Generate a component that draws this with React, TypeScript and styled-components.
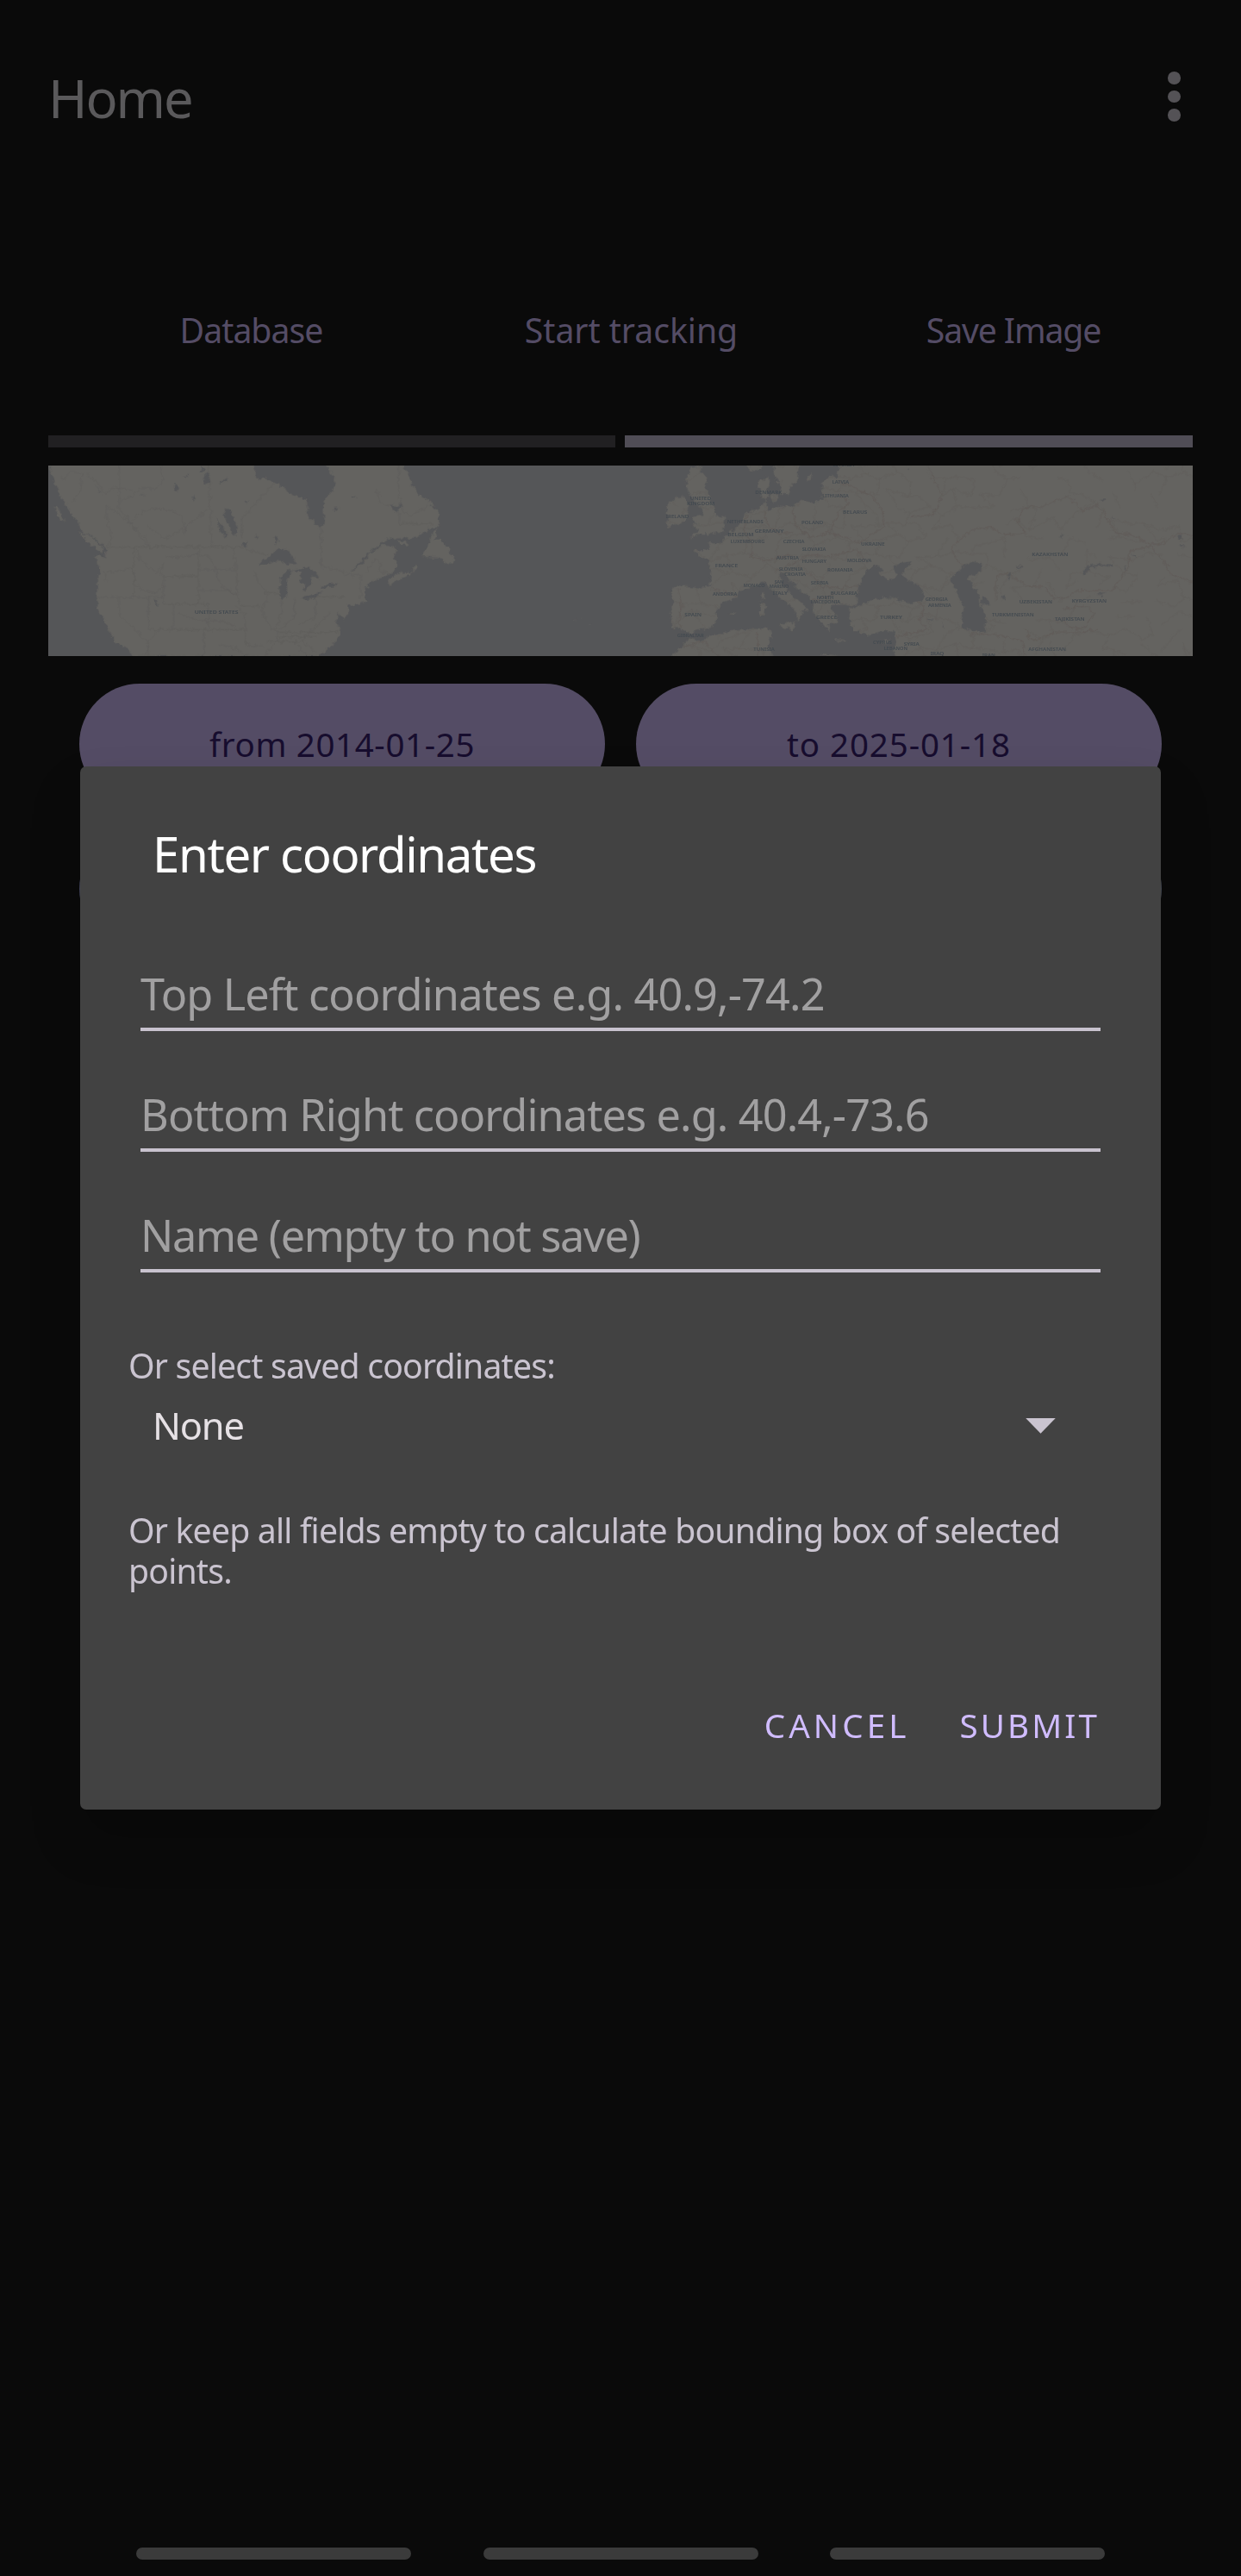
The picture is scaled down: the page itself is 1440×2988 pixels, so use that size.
import React from 'react';
import styled, { createGlobalStyle } from 'styled-components';

const GlobalStyle = createGlobalStyle`
  *, *::before, *::after { box-sizing: border-box; }
  body { margin: 0; background: #0a0a0a; }
`;

const Screen = styled.div`
  position: relative;
  display: flex;
  flex-direction: column;
  width: 1440px;
  height: 2988px;
  background: #0a0a0a;
  font-family: 'Noto Sans', 'Open Sans', sans-serif;
  overflow: hidden;
`;

const AppBar = styled.header`
  display: flex;
  align-items: center;
  justify-content: space-between;
  height: 224px;
  padding: 0 70px 0 56px;
`;

const PageTitle = styled.h1`
  margin: 0;
  padding-top: 1px;
  font-size: 61.5px;
  font-weight: 400;
  letter-spacing: -2.1px;
  color: #5a595b;
`;

const MoreButton = styled.button`
  display: flex;
  flex-direction: column;
  align-items: center;
  gap: 7px;
  padding: 0;
  border: 0;
  background: none;
`;

const Dot = styled.span`
  width: 15px;
  height: 14.5px;
  border-radius: 50%;
  background: #545256;
`;

const Actions = styled.nav`
  display: grid;
  grid-template-columns: 441px 441px 446px;
  height: 245px;
  margin: 36px 0 0 71px;
`;

const ActionButton = styled.button<{ $track: number }>`
  padding: 0;
  border: 0;
  background: none;
  font: inherit;
  font-size: 39.2px;
  letter-spacing: ${(p) => p.$track}px;
  color: #544c65;
`;

const Content = styled.main`
  display: flex;
  flex-direction: column;
  padding: 0 56px;
`;

const Progress = styled.div`
  display: grid;
  grid-template-columns: 658px 659px;
  gap: 11px;
  height: 14px;
`;

const Segment = styled.div<{ $active?: boolean }>`
  background: ${(p) => (p.$active ? '#504d56' : '#212022')};
`;

const MapFrame = styled.div`
  height: 221px;
  margin-top: 21px;
  background: #555658;

  svg { display: block; }
`;

const PillGrid = styled.div`
  display: grid;
  grid-template-columns: 610px 610px;
  gap: 28px 36px;
  margin: 32px 36px 0;
`;

const Pill = styled.button<{ $tone: string; $track?: number }>`
  height: 140px;
  padding: 0;
  border: 0;
  border-radius: 70px;
  background: ${(p) => p.$tone};
  font: inherit;
  font-size: 38.5px;
  letter-spacing: ${(p) => p.$track ?? 0}px;
  color: #170d2e;
`;

const SystemNav = styled.footer`
  display: flex;
  justify-content: center;
  gap: 83.5px;
  margin-top: auto;
  padding-bottom: 19px;
`;

const NavHandle = styled.span`
  width: 319px;
  height: 14px;
  border-radius: 7px;
  background: #3b3b3b;
`;

const Overlay = styled.div`
  position: absolute;
  inset: 0;
  display: flex;
  align-items: center;
  justify-content: center;
`;

const Dialog = styled.section`
  display: flex;
  flex-direction: column;
  width: 1254px;
  height: 1210px;
  border-radius: 7px;
  background: #424242;
  box-shadow: 0 34px 60px rgba(0, 0, 0, 0.2);
`;

const DialogTitle = styled.h2`
  margin: 0;
  padding: 36px 84px 0;
  font-size: 56.4px;
  font-weight: 400;
  line-height: 132px;
  letter-spacing: -1.39px;
  color: #ffffff;
`;

const Field = styled.div<{ $track: number }>`
  height: 140px;
  margin: 0 70px;
  padding-top: 57px;
  border-bottom: 4px solid #c8c2ce;
  font-size: 50.4px;
  line-height: 79px;
  letter-spacing: ${(p) => p.$track}px;
  white-space: nowrap;
  color: #a1a0a1;
`;

const Fields = styled.div`
  display: flex;
  flex-direction: column;
  margin-top: -1px;
`;

const Note = styled.p<{ $gap: number }>`
  margin: ${(p) => p.$gap}px 56px 0;
  font-size: 39.2px;
  line-height: 46.8px;
  letter-spacing: -0.82px;
  color: #cac4d0;
`;

const Select = styled.div`
  display: flex;
  align-items: center;
  justify-content: space-between;
  height: 92px;
  padding: 0 122px 0 84px;
  font-size: 43.4px;
  letter-spacing: -1.19px;
  color: #e6e1e5;
`;

const Caret = styled.span`
  width: 35px;
  height: 18px;
  background: #cac4d0;
  clip-path: polygon(0 0, 100% 0, 50% 100%);
`;

const DialogActions = styled.div`
  display: flex;
  justify-content: flex-end;
  gap: 58px;
  height: 96px;
  margin: auto 71px 50px 0;
`;

const TextButton = styled.button<{ $track: number }>`
  padding: 0;
  border: 0;
  background: none;
  font: inherit;
  font-size: 38.5px;
  letter-spacing: ${(p) => p.$track}px;
  color: #d0bcff;
`;

const MapLabel = styled.text`
  font-family: 'Noto Sans', 'Open Sans', sans-serif;
  font-weight: 600;
  fill: #434a50;
`;

// Map shapes use three units per pixel, with one local origin for each region.
const americaLand =
  'M48 30 60 60 75 95 90 130 110 165 125 195 150 225 165 262 200 272 230 300 250 325 250 355 222 340 213 345 228 385 222 440 218 475 222 525 240 560 260 600 285 650 320 660 343 693H990L1020 665 1060 630 1062 600 1050 570 1058 543 1075 565 1090 545 1092 515 1125 512 1160 500 1150 480 1150 455 1180 430 1215 415 1248 400 1258 383 1250 345 1260 325 1250 312 1212 310 1170 335 1140 375 1090 410 1130 370 1170 325 1210 300 1222 283 1330 280 1370 250 1405 240 1408 190 1385 170 1378 155 1340 135 1310 95 1300 60 1285 30V10H1005L1015 30 1047 70 1045 110 1005 150 1012 230 990 250 950 200 948 150 900 135 850 95 800 75 775 80 762 30V10H48Z';
const americaIslands =
  'M1405 245 1390 290 1415 290 1445 320 1440 340 1462 345 1455 372 1430 368 1410 350 1348 348 1370 310 1385 265ZM1335 385 1325 370 1315 400 1265 405 1230 432 1238 450 1260 430 1310 408ZM1260 290 1285 293 1305 310 1280 305ZM152 262 200 278 240 320 235 335 195 305ZM70 172 90 185 103 230 80 205ZM1875 565 1888 568 1878 569ZM1930 582 1940 583 1930 585ZM1900 561 1910 563 1902 564Z';
const americaLakes =
  'M782 375 830 335 850 318 885 325 905 355 910 378 880 372 850 360 810 372ZM855 420 880 395 900 392 880 430 880 485 862 495 853 475ZM900 390 950 385 980 400 992 425 965 415 955 450 935 470 940 440 922 435 930 405ZM930 492 965 478 1005 468 975 490 945 500ZM995 455 1020 440 1055 440 1040 455ZM658 180 680 182 692 215 704 240 702 275 690 265 680 245 665 215ZM635 205 650 240 672 270 668 282 645 255ZM835 282 842 276 848 290 840 304ZM415 495 425 498 432 515 424 512ZM595 55 612 60 605 90 592 95ZM580 35 590 35 588 52 578 55ZM645 90 675 70 668 82 650 96ZM485 95 500 105 498 122 488 115ZM515 70 535 64 530 72ZM728 300 742 292 738 315 728 314ZM550 138 562 145 552 150ZM735 152 748 154 738 160ZM765 272 782 278 770 282ZM1100 140 1122 140 1105 147ZM1035 180 1062 178 1050 188ZM212 98 235 130 228 124ZM365 130 385 131 370 134ZM1242 170 1280 168 1265 185 1245 184Z';
const americaBorders =
  'M250 313H722L728 320 745 325 780 335 810 340M295 30V180L330 225 370 280 398 313M440 30 445 90 420 110 365 110 340 135 300 150M608 30 612 200 616 313M722 280V215L835 90M345 313V488M218 488H448M295 488V550L390 640 398 693M398 488V601H735M448 415V511H605M448 415H570M570 315V510M570 392H700M570 464H670L705 480M440 415 448 370 430 400 400 390 360 345 355 320M345 440 380 465 420 472 450 445M484 511V601M440 600 398 640 388 693M605 511V600M590 601V693M690 315 702 370 705 470 715 520H788M570 340 605 345 635 390 635 425 660 455 705 480M735 600V650L795 660M700 520 730 545 735 600M800 475H855M765 400 780 440 805 465 808 500 790 540 825 595 845 610H1060M860 495V540L840 600M905 490V560L850 600M980 490V560L920 580M980 487H1080M845 625H980M810 643H935L980 680M250 313 270 290 250 210 250 170 320 220 395 290 398 313M345 215 380 190 430 178 490 190 520 225 520 270M390 240 455 285 520 250 600 185M998 250V380L1080 400M95 80 130 50 165 60 160 120 130 160M180 60 215 85 245 130 280 105 340 115M250 400 340 390 350 410 345 440M240 400 250 430M460 345 500 350 570 338M642 655 700 665 735 693M500 545 570 570 650 570 700 590M845 610 845 640 800 693M930 643 960 610 1000 570 1030 545M900 640 950 693M1080 410H1135V490M1270 232H1385M1270 232V200L1240 170 1205 160 1190 110M1268 30V120L1275 180 1310 205 1370 168M1155 400 1185 360 1205 370 1200 395 1230 405';
const eurasiaLand =
  'M700 10 695 70 670 65 645 85 640 130 645 145 610 160 570 152 530 175 495 170 470 175 460 190 445 160 430 130 420 110 420 85 440 75 458 65 460 95 445 120 460 140 440 155 425 180 400 185 375 200 360 230 330 255 305 270 300 290 275 305 245 298 250 325 195 325 210 342 245 360 255 400 252 450 200 452 140 448 118 462 125 500 115 545 122 598 155 600 185 612 210 600 250 598 275 570 270 540 300 505 345 490 350 470 375 458 415 450 435 432 470 465 500 495 530 515 553 540 555 575 572 550 570 535 598 530 570 510 545 490 515 455 495 420 492 402 510 402 530 430 565 465 600 490 612 520 620 560 640 580 660 605 672 610 665 580 695 575 690 550 670 530 680 515 720 515 745 520 770 510 760 480 780 425 800 390 825 378 845 385 850 400 840 405 870 430 910 412 890 400 885 385 920 370 955 362 930 390 920 412 960 440 990 460 998 485 985 505 940 510 880 488 820 495 775 515 735 530 740 570 750 600 800 620 860 605 895 610 898 650 885 710H1960V10H700Z';
const eurasiaIslands =
  'M370 25 400 50 430 40 440 25ZM470 15 480 70 495 105 500 132 525 128 530 105 555 85 567 15ZM118 710 118 693 160 655 175 630 215 640 270 620 330 605 400 598 460 595 467 620 455 650 475 710ZM630 693 650 685 700 693ZM492 580 550 575 540 603 500 590ZM425 510 445 508 442 550 425 558ZM432 470 442 475 438 500 428 495ZM685 633 735 638 730 643 690 640ZM845 642 882 632 870 650 855 652ZM318 545 338 537 330 550ZM185 35 222 32 215 60 243 65 235 105 245 125 262 170 275 205 305 210 298 245 300 262 250 268 215 268 180 285 215 250 190 240 200 230 190 210 225 200 225 175 205 165 180 130 165 90 175 60ZM135 140 165 140 180 165 170 205 170 225 110 245 98 235 110 215 100 195 108 165ZM590 70 605 55 602 80 593 82ZM460 132 485 130 488 152 468 155Z';
const eurasiaLakes =
  'M1088 425 1125 385 1165 365 1197 370 1195 402 1150 415 1160 445 1188 475 1192 515 1210 540 1212 605 1175 608 1130 595 1125 560 1135 530 1115 480 1100 450ZM1195 488 1215 490 1225 512 1198 518ZM1552 400 1565 378 1600 372 1650 374 1645 382 1610 378 1570 384 1560 412ZM1690 380 1700 386 1698 396ZM1288 432 1294 400 1300 405 1292 432ZM1315 378 1340 382 1332 388ZM1265 485 1278 480 1280 498 1268 497ZM1600 478 1632 474 1615 484ZM1878 278 1890 272 1896 282 1886 288ZM1888 306 1903 308 1898 316ZM1718 335 1740 342 1738 348ZM1608 152 1630 146 1622 156ZM1468 275 1482 272 1476 284ZM1655 202 1662 212 1656 210ZM1010 562 1028 568 1014 570ZM1058 575 1068 598 1062 592ZM935 38 948 34 944 46Z';
const eurasiaNations =
  'M1125 285 1140 270 1165 255 1200 245 1240 250 1270 270 1345 268 1340 250 1320 230 1345 175 1400 175 1500 135 1550 190 1600 165 1665 265 1720 270 1785 305 1830 300 1880 265 1932 272M1125 285 1090 320 1120 370 1160 390M1247 500V415L1290 405 1355 450 1410 450 1450 495 1500 490 1530 465 1650 465 1680 425 1710 380 1710 330 1785 310M1785 310 1835 370 1860 410 1932 435M1480 530 1560 520 1590 545 1560 590 1540 600 1500 590 1470 560M1350 600 1370 640 1460 610 1540 610 1600 600M1160 615 1250 620 1340 640 1345 693M700 130 740 160 700 190 665 265 700 270 770 300 860 240 850 180 820 140 740 100 700 90M540 175 550 240 600 280 665 265M440 190 455 240 490 270 540 260M380 200 370 250 400 310 395 350 440 360 540 340M255 460 345 480M140 460 150 500 145 595M480 400 540 370 600 340 680 345 760 320 800 370M590 400 640 450 700 455 780 450M610 500 680 480M960 500 1000 520 980 570 1010 600 900 625M160 660 230 640 280 693M415 610 420 693M1020 60 1060 130 1030 200 950 210';

const makeMesh = () => {
  let seed = 41;
  const random = () => {
    seed = (seed * 1103515245 + 12345) % 2147483648;
    return seed / 2147483648;
  };
  const cols = 34;
  const rows = 14;
  const points = Array.from({ length: rows }, (_, r) =>
    Array.from({ length: cols }, (_, c) => [
      Math.round(90 + c * 56 + (r % 2) * 28 + (random() - 0.5) * 38),
      Math.round(10 + r * 54 + (c % 2) * 16 + (random() - 0.5) * 34),
    ]),
  );
  let d = '';
  for (let r = 0; r < rows; r++) {
    for (let c = 0; c < cols; c++) {
      const [x, y] = points[r][c];
      const dense = x < 1080 ? 0.85 : 0.45;
      if (c + 1 < cols && random() < dense) d += `M${x} ${y}L${points[r][c + 1].join(' ')}`;
      if (r + 1 < rows && (r + c) % 2 === 0 && random() < dense + 0.15) d += `M${x} ${y}L${points[r + 1][c].join(' ')}`;
    }
  }
  return d;
};
const mesh = makeMesh();

type Label = [text: string, x: number, y: number, width: number, size?: number];
const labels: Label[] = [
  ['UNITED', 182, 151, 74], ['KINGDOM', 171, 169, 97], ['IRELAND', 98, 214, 80],
  ['DENMARK', 409, 130, 93, 16], ['LATVIA', 677, 94, 58], ['LITHUANIA', 643, 140, 91],
  ['BELARUS', 714, 198, 85], ['POLAND', 570, 234, 76], ['NETHERLANDS', 311, 232, 126, 15],
  ['GERMANY', 407, 263, 101], ['BELGIUM', 313, 277, 90], ['LUXEMBOURG', 323, 299, 119, 15],
  ['CZECHIA', 506, 301, 74], ['SLOVAKIA', 572, 327, 83], ['UKRAINE', 777, 308, 83],
  ['AUSTRIA', 482, 357, 79], ['HUNGARY', 572, 368, 85], ['MOLDOVA', 729, 365, 85],
  ['FRANCE', 269, 383, 80], ['SLOVENIA', 491, 395, 84, 15], ['CROATIA', 511, 414, 74],
  ['ROMANIA', 660, 399, 89], ['MONACO', 368, 453, 75, 15], ['SAN', 476, 441, 32, 15],
  ['MARINO', 458, 456, 68, 15], ['SERBIA', 602, 443, 62], ['ITALY', 470, 479, 52],
  ['ANDORRA', 261, 482, 85, 15], ['BULGARIA', 671, 480, 94], ['NORTH', 623, 495, 59, 15],
  ['MACEDONIA', 602, 511, 103, 15], ['SPAIN', 163, 556, 59], ['GREECE', 621, 563, 73],
  ['TURKEY', 843, 564, 78], ['GIBRALTAR', 137, 626, 93, 15], ['TUNISIA', 403, 674, 73],
  ['CYPRUS', 819, 650, 66, 15], ['SYRIA', 926, 657, 54], ['LEBANON', 857, 673, 82, 15],
  ['IRAQ', 1019, 691, 47], ['GEORGIA', 1001, 501, 78, 15], ['ARMENIA', 1011, 522, 80, 15],
  ['KAZAKHSTAN', 1372, 345, 126], ['UZBEKISTAN', 1328, 510, 115], ['KYRGYZSTAN', 1511, 506, 121],
  ['TURKMENISTAN', 1233, 555, 146], ['TAJIKISTAN', 1452, 571, 104], ['AFGHANISTAN', 1360, 676, 131],
  ['IRAN', 1199, 697, 46], ['ESTONIA', 680, 33, 73],
];

function WorldMap() {
  return (
    <MapFrame>
      <svg width="1328" height="221" viewBox="48 30 3984 663">
        <defs>
          <filter
            id="coast"
            x="0"
            y="0"
            width="4080"
            height="740"
            filterUnits="userSpaceOnUse"
            colorInterpolationFilters="sRGB"
          >
            <feTurbulence type="fractalNoise" baseFrequency="0.06" numOctaves="3" seed="7" />
            <feDisplacementMap in="SourceGraphic" scale="22" xChannelSelector="R" yChannelSelector="G" />
          </filter>
          <clipPath id="eurasia">
            <path d={eurasiaLand} />
            <path d={eurasiaIslands} />
          </clipPath>
        </defs>
        <g filter="url(#coast)" strokeLinejoin="round">
          <path d={americaLand} fill="#646360" stroke="#646360" strokeWidth="3" />
          <path d={americaIslands} fill="#646360" />
          <path d={americaBorders} fill="none" stroke="#5d5c5a" strokeWidth="2" />
          <path d={americaLakes} fill="#555658" />
          <g transform="translate(2100 0)">
            <path d={eurasiaLand} fill="#646360" />
            <path d={eurasiaIslands} fill="#646360" />
            <g clipPath="url(#eurasia)" fill="none">
              <path d={mesh} stroke="#605e5b" strokeWidth="2" />
              <path d={eurasiaNations} stroke="#5e5754" strokeWidth="2.2" />
            </g>
            <path d={eurasiaLakes} fill="#555658" />
          </g>
        </g>
        <MapLabel x={557} y={546} fontSize={18} textLength={153} lengthAdjust="spacingAndGlyphs">
          UNITED STATES
        </MapLabel>
        <g transform="translate(2100 0)">
          {labels.map(([text, x, y, width, size]) => (
            <MapLabel key={text} x={x} y={y} fontSize={size ?? 18} textLength={width} lengthAdjust="spacingAndGlyphs">
              {text}
            </MapLabel>
          ))}
        </g>
      </svg>
    </MapFrame>
  );
}

export default function App() {
  return (
    <Screen>
      <GlobalStyle />
      <AppBar>
        <PageTitle>Home</PageTitle>
        <MoreButton aria-label="More options">
          <Dot />
          <Dot />
          <Dot />
        </MoreButton>
      </AppBar>
      <Actions>
        <ActionButton $track={-0.99}>Database</ActionButton>
        <ActionButton $track={-0.04}>Start tracking</ActionButton>
        <ActionButton $track={-1.14}>Save Image</ActionButton>
      </Actions>
      <Content>
        <Progress>
          <Segment />
          <Segment $active />
        </Progress>
        <WorldMap />
        <PillGrid>
          <Pill $tone="#544c65" $track={0.63}>from 2014-01-25</Pill>
          <Pill $tone="#544c65" $track={0.9}>to 2025-01-18</Pill>
          <Pill $tone="#464860" />
          <Pill $tone="#464a55" />
        </PillGrid>
      </Content>
      <SystemNav>
        <NavHandle />
        <NavHandle />
        <NavHandle />
      </SystemNav>
      <Overlay>
        <Dialog role="dialog">
          <DialogTitle>Enter coordinates</DialogTitle>
          <Fields>
            <Field $track={-0.84}>Top Left coordinates e.g. 40.9,-74.2</Field>
            <Field $track={-0.87}>Bottom Right coordinates e.g. 40.4,-73.6</Field>
            <Field $track={-1.28}>Name (empty to not save)</Field>
          </Fields>
          <Note $gap={85}>Or select saved coordinates:</Note>
          <Select>
            None
            <Caret />
          </Select>
          <Note $gap={52}>
            Or keep all fields empty to calculate bounding box of selected points.
          </Note>
          <DialogActions>
            <TextButton $track={4.11}>CANCEL</TextButton>
            <TextButton $track={3.14}>SUBMIT</TextButton>
          </DialogActions>
        </Dialog>
      </Overlay>
    </Screen>
  );
}
